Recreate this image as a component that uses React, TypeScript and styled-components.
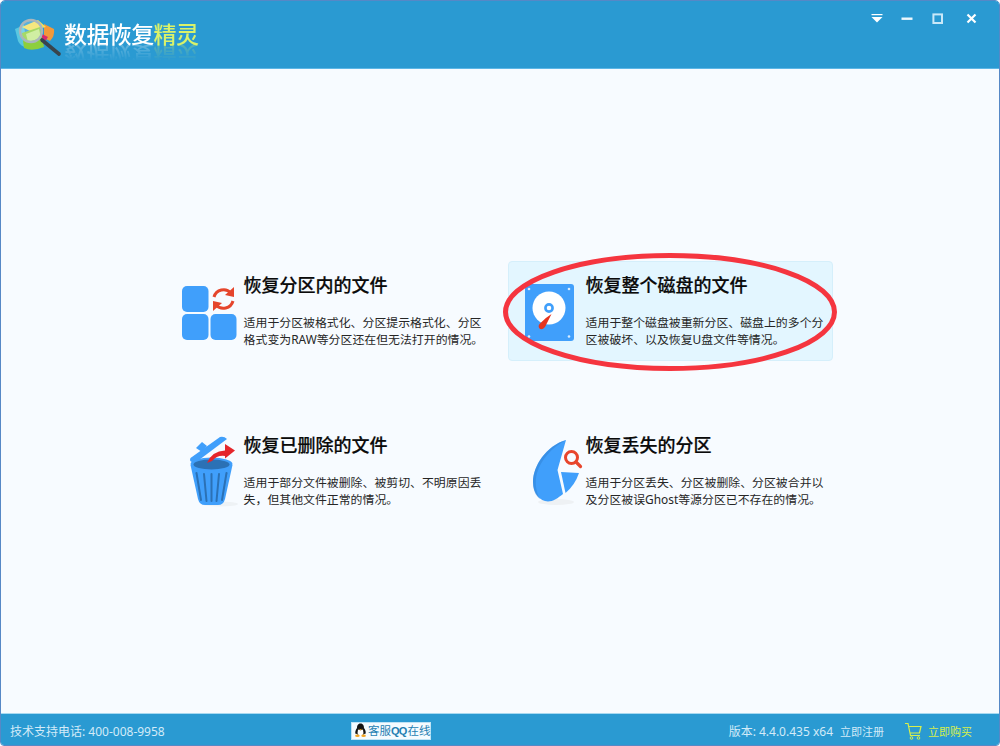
import React from "react";
import styled, { createGlobalStyle } from "styled-components";

const FONT = `"Noto Sans", "Noto Sans CJK SC", sans-serif`;

const Global = createGlobalStyle`
  html, body { margin: 0; padding: 0; background: #fff; }
  body { font-family: ${FONT}; }
  * { box-sizing: border-box; }
`;

const Window = styled.div`
  width: 1000px;
  height: 746px;
  display: flex;
  flex-direction: column;
  border: 1px solid #5688c6;
  border-radius: 5px 5px 4px 4px;
  overflow: hidden;
  background: #f7fbff;
`;

const Header = styled.header`
  height: 68px;
  flex: none;
  display: flex;
  align-items: flex-start;
  padding: 9px 12px 0 11px;
  background: #2a9ad2;
  border-bottom: 1px solid #5cb6e6;
`;

const LogoMark = styled.svg`
  width: 50px;
  height: 40px;
  margin-top: 8px;
  flex: none;
`;

const AppTitle = styled.div`
  margin: 9px 0 0 2px;
  font-size: 23px;
  font-weight: 500;
  line-height: 30px;
  letter-spacing: -0.6px;
  color: #fff;
  white-space: nowrap;
  -webkit-box-reflect: below -9px linear-gradient(transparent 30%, rgba(255, 255, 255, 0.34));
`;

const AppTitleAccent = styled.span`
  color: #d9f26a;
`;

const Controls = styled.div`
  margin-left: auto;
  display: flex;
`;

const Control = styled.button<{ $gap?: number }>`
  width: 30px;
  height: 18px;
  margin-left: ${(p) => p.$gap ?? 0}px;
  padding: 0;
  border: 0;
  background: transparent;
  display: flex;
  align-items: center;
  justify-content: center;
`;

const ControlGlyph = styled.svg`
  width: 12px;
  height: 12px;
`;

const Main = styled.main`
  flex: 1;
  display: grid;
  grid-template-columns: 325px 325px;
  grid-auto-rows: 100px;
  gap: 60px 17px;
  justify-content: center;
  align-content: center;
  padding-right: 1px;
`;

const Card = styled.section<{ $active?: boolean }>`
  position: relative;
  display: flex;
  padding: 11px 0 0 15px;
  border: 1px solid ${(p) => (p.$active ? "#d5effb" : "transparent")};
  border-radius: 4px;
  background: ${(p) => (p.$active ? "#e3f6ff" : "transparent")};
`;

const CardIcon = styled.svg`
  width: 61px;
  height: 80px;
  margin: -1px 0.6px 0 0;
  flex: none;
`;

const CardBody = styled.div`
  width: 242px;
`;

const CardTitle = styled.h2`
  margin: 0 0 17px;
  font-size: 18px;
  line-height: 24px;
  font-weight: 500;
  color: #0a0a0a;
  -webkit-text-stroke: 0.2px #0a0a0a;
  white-space: nowrap;
`;

const CardText = styled.p`
  margin: 0;
  font-size: 11.9px;
  line-height: 17px;
  color: #262626;
`;

const Highlight = styled.svg`
  position: absolute;
  left: -9px;
  top: -12px;
  width: 342px;
  height: 124px;
  pointer-events: none;
`;

const Footer = styled.footer`
  height: 32px;
  flex: none;
  display: flex;
  align-items: center;
  padding: 2px 27px 0 9px;
  background: #2a9ad2;
  border-top: 1px solid #a8d9f1;
  font-size: 12px;
  color: #d3ebf8;
`;

const Phone = styled.div`
  width: 341px;
  flex: none;
  white-space: nowrap;
`;

const QQButton = styled.div`
  width: 80px;
  height: 18px;
  display: flex;
  align-items: center;
  padding-left: 2px;
  background: #f4fbff;
  border: 1px solid #bfe3f5;
  color: #1f7fb2;
  font-size: 11.5px;
  line-height: 16px;
  white-space: nowrap;
`;

const PenguinIcon = styled.svg`
  width: 13px;
  height: 15px;
  margin-right: 1px;
  flex: none;
`;

const QQMark = styled.span`
  font-family: "Liberation Sans Narrow", "Liberation Sans", sans-serif;
  font-size: 11px;
  font-weight: 700;
  letter-spacing: -0.8px;
  margin-right: 1px;
`;

const Version = styled.div`
  margin-left: auto;
  white-space: nowrap;
`;

const Register = styled.div`
  margin-left: 7px;
  font-size: 11px;
  white-space: nowrap;
`;

const CartIcon = styled.svg`
  width: 18px;
  height: 18px;
  margin-left: 20px;
  flex: none;
`;

const Buy = styled.div`
  margin-left: 6px;
  font-size: 11px;
  color: #d8ef4b;
  white-space: nowrap;
`;

const Logo = () => (
  <LogoMark viewBox="12 18 50 40">
    <path d="M15 29 L24 25 L27 48 Q20 46 18 41 Z" fill="#59c7e0" />
    <path d="M44 24 L54 29 Q55 36 50 41 L44 38 Z" fill="#f2993a" />
    <path d="M22 27 L38 20 L46 27 L30 31 Z" fill="#f3e05c" />
    <path d="M40 33 L48 37 L42 46 L34 42 Z" fill="#d9286f" />
    <path d="M22 33 L40 27 L44 47 Q32 52 24 48 Z" fill="#8dcf3c" />
    <path d="M26 34 L39 29 L41 38 L28 42 Z" fill="#c3e98a" />
    <path d="M42 40 L59 54" stroke="#39444c" strokeWidth="3.6" strokeLinecap="round" />
    <circle cx="31" cy="31" r="11" fill="#fff" fillOpacity="0.22" stroke="#aab6bc" strokeWidth="2.4" />
  </LogoMark>
);

const PartitionIcon = () => (
  <CardIcon viewBox="182 271 61 80">
    <rect x="182" y="285" width="26.5" height="26" rx="5" fill="#409ffb" />
    <rect x="182" y="313" width="26.5" height="26" rx="5" fill="#409ffb" />
    <rect x="210.5" y="313" width="26" height="26" rx="5" fill="#409ffb" />
    <path d="M214 296 A10 10 0 0 1 231 292" fill="none" stroke="#e5452c" strokeWidth="3" />
    <path d="M234 286 L234 296 L225 294 Z" fill="#e5452c" />
    <path d="M233 300 A10 10 0 0 1 216 304" fill="none" stroke="#e5452c" strokeWidth="3" />
    <path d="M213 310 L213 300 L222 302 Z" fill="#e5452c" />
  </CardIcon>
);

const DiskIcon = () => (
  <CardIcon viewBox="524 271 61 80">
    <rect x="525" y="283" width="49" height="57" rx="3" fill="#409ffb" />
    <circle cx="549" cy="307" r="16.5" fill="#fff" />
    <circle cx="549" cy="307" r="3.6" fill="#fff" stroke="#409ffb" strokeWidth="2.6" />
    <path d="M551.5 313 L545 326 Q542 329.5 539.5 327.5 Q537.5 325 540 322.5 Q545 317 551.5 313 Z" fill="#e5341f" />
    <g fill="#d8ecff">
      <circle cx="529" cy="288" r="1.3" />
      <circle cx="569" cy="288" r="1.3" />
      <circle cx="529" cy="335.5" r="1.3" />
      <circle cx="569" cy="335.5" r="1.3" />
    </g>
  </CardIcon>
);

const TrashIcon = () => (
  <CardIcon viewBox="182 431 61 80">
    <ellipse cx="220" cy="503" rx="18" ry="2.5" fill="#eef2f5" />
    <path d="M190.5 464 L198 498 Q199.5 504 205 504 L218 504 Q223.5 504 225 498 L232.5 464 Z" fill="#409ffb" />
    <ellipse cx="211.5" cy="463" rx="21" ry="6.5" fill="#409ffb" />
    <ellipse cx="211.5" cy="463.5" rx="18" ry="5" fill="#2b71b5" />
    <g stroke="#2b71b5" strokeWidth="2" strokeLinecap="round">
      <path d="M196.5 472 L201 499" />
      <path d="M204 473 L206.5 500" />
      <path d="M211.5 473 L211.5 500" />
      <path d="M219 473 L216.5 500" />
      <path d="M226.5 472 L222 499" />
    </g>
    <path d="M190.5 457 L220 436 Q224 435 227 438 L199 459 Q194 461 192 461 Q189 460 190.5 457 Z" fill="#409ffb" />
    <path d="M196 447 L202 441 L207 445 L202 451 Z" fill="#409ffb" />
    <path d="M207 462 Q212 450 225 449.5 L225 443 L235 449.5 L225 457.5 L225 455 Q217 454 212 460 Z" fill="#e5262b" />
  </CardIcon>
);

const PieIcon = () => (
  <CardIcon viewBox="524 431 61 80">
    <ellipse cx="556" cy="501" rx="18" ry="3" fill="#eef1f4" />
    <path d="M566 439 C546 445 533 465 533 481 C533 493 540 500 548 500.5 C553 500.5 558 497 563 493 L557.5 469 Z" fill="#409ffb" />
    <path d="M566 439 C546 445 533 465 533 481 C533 490 536 495 540 498 C536 491 534.5 481 537 472 C541 459 551 447 566 439 Z" fill="#2f7fcf" fillOpacity="0.45" />
    <path d="M561 471 L579 472 Q575 484 565.5 492 Z" fill="#409ffb" />
    <circle cx="571.5" cy="456.5" r="6" fill="none" stroke="#e8452c" strokeWidth="3" />
    <path d="M576 461 L580.5 465.5" stroke="#e8452c" strokeWidth="3.2" strokeLinecap="round" />
  </CardIcon>
);

const Penguin = () => (
  <PenguinIcon viewBox="0 0 13 15">
    <path d="M6.5 0.5 C9.3 0.5 10 3 10 5 C11.5 7 12.3 9.5 11.3 11 L9.5 10.8 L9.5 12 L3.5 12 L3.5 10.8 L1.7 11 C0.7 9.5 1.5 7 3 5 C3 3 3.7 0.5 6.5 0.5 Z" fill="#141414" />
    <path d="M4 6.5 Q6.5 8 9 6.5 Q10 10 8.6 12 L4.4 12 Q3 10 4 6.5 Z" fill="#fff" />
    <path d="M4.5 5.6 Q6.5 7 8.5 5.6 L6.5 7.4 Z" fill="#f5a623" />
    <ellipse cx="3.4" cy="12.8" rx="2.3" ry="1.3" fill="#f5a623" />
    <ellipse cx="9.6" cy="12.8" rx="2.3" ry="1.3" fill="#f5a623" />
  </PenguinIcon>
);

export default function App() {
  return (
    <>
      <Global />
      <Window>
        <Header>
          <Logo />
          <AppTitle>
            数据恢复<AppTitleAccent>精灵</AppTitleAccent>
          </AppTitle>
          <Controls>
            <Control aria-label="菜单">
              <ControlGlyph viewBox="0 0 12 12">
                <rect x="0.5" y="1" width="11" height="1.2" fill="#fff" />
                <path d="M0.5 4 L11.5 4 L6 9.6 Z" fill="#fff" />
              </ControlGlyph>
            </Control>
            <Control aria-label="最小化" $gap={0.5}>
              <ControlGlyph viewBox="0 0 12 12">
                <rect x="0.5" y="4.5" width="11" height="2.4" fill="#eef8fd" />
              </ControlGlyph>
            </Control>
            <Control aria-label="最大化" $gap={0.5}>
              <ControlGlyph viewBox="0 0 12 12">
                <rect x="1.4" y="1.4" width="8.6" height="8.6" fill="none" stroke="#c9e8f8" strokeWidth="2" />
              </ControlGlyph>
            </Control>
            <Control aria-label="关闭" $gap={4.5}>
              <ControlGlyph viewBox="0 0 12 12">
                <path d="M1.5 1.5 L9.5 9.5 M9.5 1.5 L1.5 9.5" stroke="#fff" strokeWidth="2.2" />
              </ControlGlyph>
            </Control>
          </Controls>
        </Header>

        <Main>
          <Card>
            <PartitionIcon />
            <CardBody>
              <CardTitle>恢复分区内的文件</CardTitle>
              <CardText>适用于分区被格式化、分区提示格式化、分区格式变为RAW等分区还在但无法打开的情况。</CardText>
            </CardBody>
          </Card>
          <Card $active>
            <DiskIcon />
            <CardBody>
              <CardTitle>恢复整个磁盘的文件</CardTitle>
              <CardText>适用于整个磁盘被重新分区、磁盘上的多个分区被破坏、以及恢复U盘文件等情况。</CardText>
            </CardBody>
            <Highlight viewBox="500 250 342 124">
              <ellipse cx="670" cy="312" rx="164.5" ry="56.5" fill="none" stroke="#f5353f" strokeWidth="5" />
            </Highlight>
          </Card>
          <Card>
            <TrashIcon />
            <CardBody>
              <CardTitle>恢复已删除的文件</CardTitle>
              <CardText>适用于部分文件被删除、被剪切、不明原因丢失，但其他文件正常的情况。</CardText>
            </CardBody>
          </Card>
          <Card>
            <PieIcon />
            <CardBody>
              <CardTitle>恢复丢失的分区</CardTitle>
              <CardText>适用于分区丢失、分区被删除、分区被合并以及分区被误Ghost等源分区已不存在的情况。</CardText>
            </CardBody>
          </Card>
        </Main>

        <Footer>
          <Phone>技术支持电话: 400-008-9958</Phone>
          <QQButton>
            <Penguin />
            客服<QQMark>QQ</QQMark>在线
          </QQButton>
          <Version>版本: 4.4.0.435 x64</Version>
          <Register>立即注册</Register>
          <CartIcon viewBox="904 720 18 18">
            <path d="M905 721.5 L908 721.5 L910.5 733.5 L920 733.5 M908.5 724.5 L921 724.5 L919.5 731 L910 731" fill="none" stroke="#d8ef4b" strokeWidth="1.2" />
            <circle cx="911.5" cy="736" r="1.3" fill="none" stroke="#d8ef4b" />
            <circle cx="918.5" cy="736" r="1.3" fill="none" stroke="#d8ef4b" />
          </CartIcon>
          <Buy>立即购买</Buy>
        </Footer>
      </Window>
    </>
  );
}
